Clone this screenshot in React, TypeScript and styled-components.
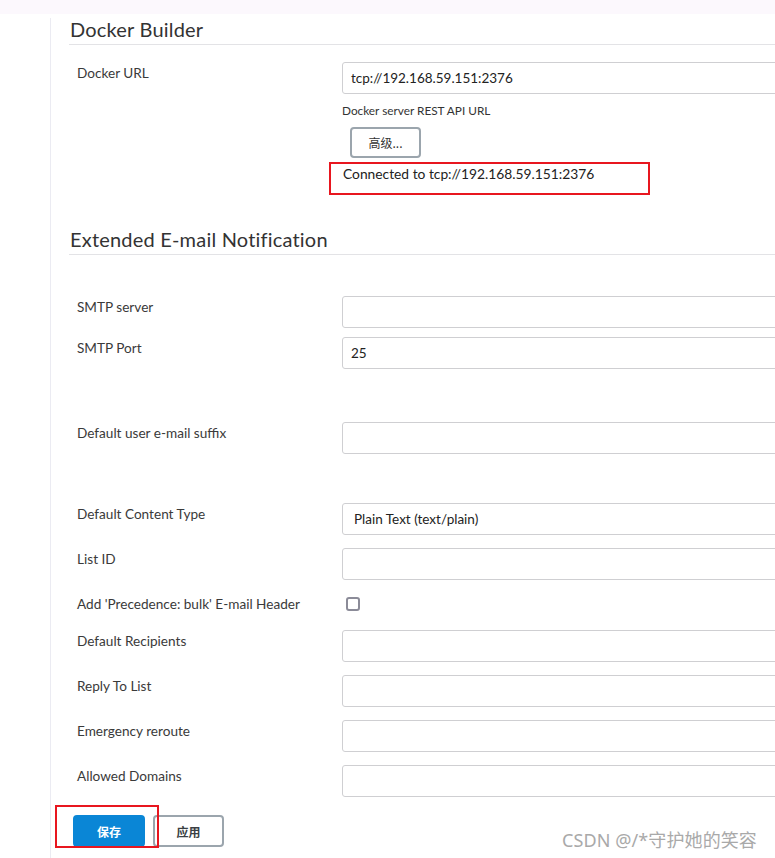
import React from "react";
import styled, { createGlobalStyle } from "styled-components";

const GlobalStyle = createGlobalStyle`
  html, body {
    margin: 0;
    padding: 0;
    background: #ffffff;
    overflow: hidden;
  }
  body {
    font-family: Lato, "Noto Sans CJK SC", sans-serif;
    color: #333333;
  }
`;

const Page = styled.div`
  position: relative;
  width: 800px;
  height: 858px;
  background: #ffffff;
`;

const TopStrip = styled.div`
  height: 14px;
  background: #fcf8fd;
`;

const Main = styled.div`
  margin-left: 50px;
  border-left: 1px solid #ebebf2;
  padding-left: 18px;
  height: 844px;
  box-sizing: border-box;
`;

const SectionHeading = styled.h2<{ $mt: number }>`
  margin: ${(p) => p.$mt}px 0 0 0;
  padding: 0 0 4px 1px;
  font-family: Lato, sans-serif;
  font-size: 20px;
  font-weight: 400;
  line-height: 22px;
  color: #333333;
  border-bottom: 1px solid #e3e3e6;
  letter-spacing: 0.2px;
`;

const Row = styled.div<{ $mt: number }>`
  display: grid;
  grid-template-columns: 273px 1fr;
  margin-top: ${(p) => p.$mt}px;
  align-items: start;
`;

const Label = styled.div`
  padding: 1px 0 0 8px;
  font-size: 13.6px;
  line-height: 20px;
  color: #3a3a3a;
`;

const Field = styled.div`
  display: flex;
  flex-direction: column;
  align-items: flex-start;
`;

const TextInput = styled.div`
  box-sizing: border-box;
  width: 100%;
  height: 32px;
  border: 1px solid #cfcfd2;
  border-radius: 3px;
  background: #ffffff;
  padding: 0 0 0 8px;
  display: flex;
  align-items: center;
  font-size: 13.5px;
  color: #222222;
`;

const SelectBox = styled(TextInput)`
  padding-left: 11px;
`;

const Description = styled.div`
  margin-top: 9px;
  font-size: 11.8px;
  line-height: 16px;
  color: #333333;
`;

const AdvancedButton = styled.button`
  margin: 8px 0 0 8px;
  box-sizing: border-box;
  width: 71px;
  height: 31px;
  border: 2px solid #9ba5ad;
  border-radius: 4px;
  background: #ffffff;
  font-family: "Noto Sans CJK SC", sans-serif;
  font-size: 12px;
  color: #333333;
  padding: 0;
  cursor: pointer;
`;

const StatusBox = styled.div`
  margin: 4px 0 0 -13px;
  box-sizing: border-box;
  width: 321px;
  height: 33px;
  border: 2px solid #e8161f;
  padding: 0 0 0 12px;
  font-size: 13.8px;
  line-height: 19px;
  color: #222222;
`;

const Checkbox = styled.span`
  display: block;
  box-sizing: border-box;
  margin: 4px 0 0 4px;
  width: 14px;
  height: 14px;
  border: 2px solid #8b8b98;
  border-radius: 3px;
  background: #ffffff;
`;

const CheckRow = styled(Row)`
  min-height: 24px;
`;

const ButtonBar = styled.div`
  position: relative;
  display: flex;
  gap: 8px;
  margin: 18px 0 0 4px;
`;

const ActionButton = styled.button<{ $primary?: boolean }>`
  box-sizing: border-box;
  width: ${(p) => (p.$primary ? 72 : 71)}px;
  height: 32px;
  border-radius: 4px;
  border: 2px solid ${(p) => (p.$primary ? "#0a86d6" : "#9ba5ad")};
  background: ${(p) => (p.$primary ? "#0a86d6" : "#ffffff")};
  color: ${(p) => (p.$primary ? "#ffffff" : "#3a3f44")};
  font-family: "Noto Sans CJK SC", sans-serif;
  font-weight: 700;
  font-size: 12px;
  padding: 0;
  cursor: pointer;
`;

const Highlight = styled.div`
  position: absolute;
  left: -18px;
  top: -10px;
  width: 104px;
  height: 43px;
  box-sizing: border-box;
  border: 2px solid #e8161f;
  pointer-events: none;
`;

const Watermark = styled.div`
  position: absolute;
  left: 562px;
  top: 828px;
  font-family: "Noto Sans", "Noto Sans CJK SC", sans-serif;
  font-size: 18px;
  line-height: 24px;
  color: #a9a9a9;
  letter-spacing: 0.1px;
`;

type FieldRow = { label: string; mt: number; value?: string; select?: boolean };

const emailRows: FieldRow[] = [
  { label: "SMTP server", mt: 41 },
  { label: "SMTP Port", mt: 9, value: "25" },
  { label: "Default user e-mail suffix", mt: 53 },
  { label: "Default Content Type", mt: 49, value: "Plain Text (text/plain)", select: true },
  { label: "List ID", mt: 13 },
];

const emailRows2: FieldRow[] = [
  { label: "Default Recipients", mt: 13 },
  { label: "Reply To List", mt: 13 },
  { label: "Emergency reroute", mt: 13 },
  { label: "Allowed Domains", mt: 13 },
];

const InputRow: React.FC<FieldRow> = ({ label, mt, value, select }) => (
  <Row $mt={mt}>
    <Label>{label}</Label>
    <Field>{select ? <SelectBox>{value}</SelectBox> : <TextInput>{value}</TextInput>}</Field>
  </Row>
);

export default function App() {
  return (
    <>
      <GlobalStyle />
      <Page>
        <TopStrip />
        <Main>
          <SectionHeading $mt={4}>Docker Builder</SectionHeading>
          <Row $mt={17}>
            <Label>Docker URL</Label>
            <Field>
              <TextInput>tcp://192.168.59.151:2376</TextInput>
              <Description>Docker server REST API URL</Description>
              <AdvancedButton>高级...</AdvancedButton>
              <StatusBox>Connected to tcp://192.168.59.151:2376</StatusBox>
            </Field>
          </Row>
          <SectionHeading $mt={33}>Extended E-mail Notification</SectionHeading>
          {emailRows.map((r) => (
            <InputRow key={r.label} {...r} />
          ))}
          <CheckRow $mt={13}>
            <Label>Add 'Precedence: bulk' E-mail Header</Label>
            <Field>
              <Checkbox />
            </Field>
          </CheckRow>
          {emailRows2.map((r) => (
            <InputRow key={r.label} {...r} />
          ))}
          <ButtonBar>
            <ActionButton $primary>保存</ActionButton>
            <ActionButton>应用</ActionButton>
            <Highlight />
          </ButtonBar>
        </Main>
        <Watermark>CSDN @/*守护她的笑容</Watermark>
      </Page>
    </>
  );
}
